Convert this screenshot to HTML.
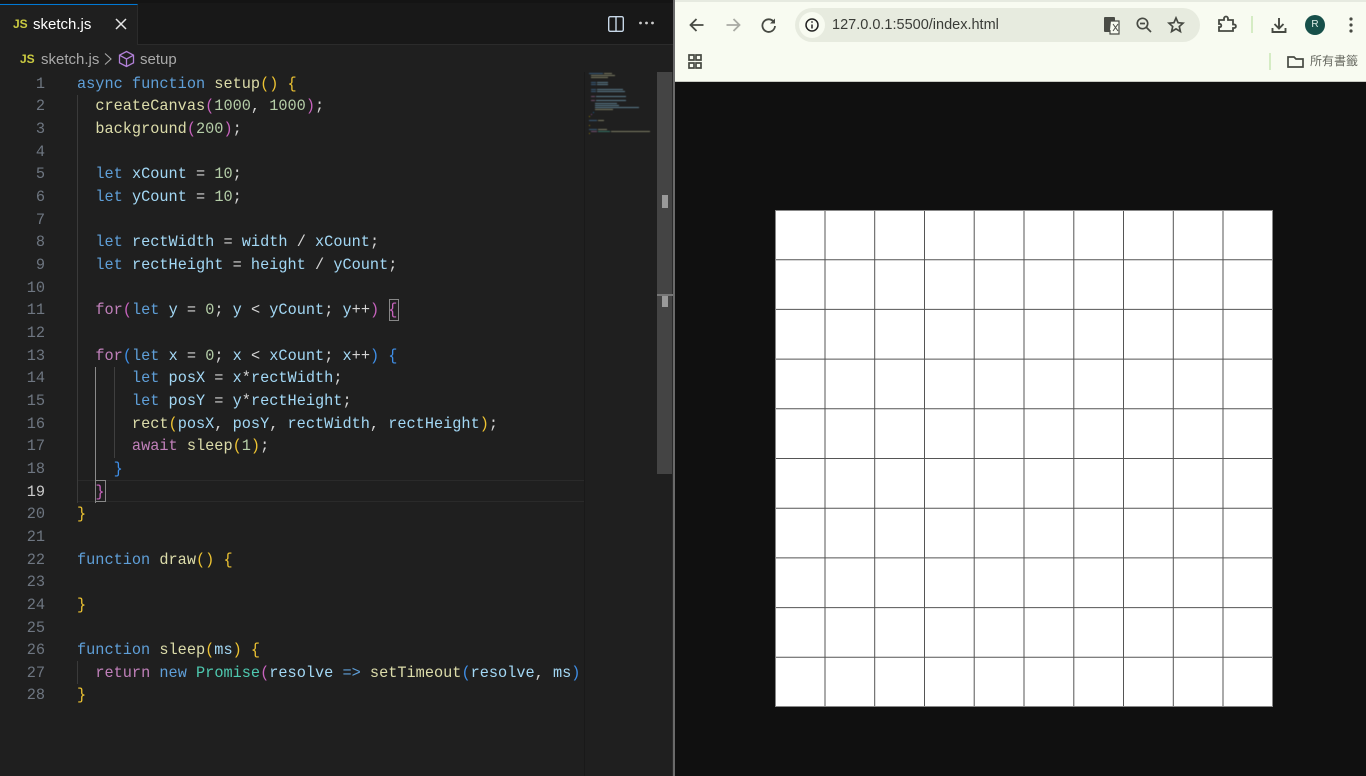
<!DOCTYPE html>
<html><head><meta charset="utf-8">
<style>
html,body{margin:0;padding:0;width:1366px;height:776px;overflow:hidden;background:#101010}
*{box-sizing:border-box}
.a{position:absolute}
#ed{left:0;top:0;width:673px;height:776px;background:#1f1f1f;overflow:hidden}
.l{position:absolute;left:77px;margin-top:1px;height:23px;font:15.25px/23px "Liberation Mono",monospace;color:#d4d4d4;white-space:pre;filter:blur(.25px)}
.n{position:absolute;left:0;margin-top:1px;width:45px;text-align:right;font:15.25px/23px "Liberation Mono",monospace;color:#6e7681;filter:blur(.25px)}
.k{color:#5f9fd8}.c{color:#c080ba}.f{color:#dcdcaa}.v{color:#a3d8f5}.d{color:#b5cea8}.t{color:#4ec9b0}
.g{color:#edc332}.o{color:#c763bd}.b{color:#3f8fe8}
.ui{font-family:"Liberation Sans",sans-serif}
</style></head><body>
<div id="ed" class="a">
<div class="a" style="left:0;top:0;width:673px;height:44px;background:#181818"></div>
<div class="a" style="left:0;top:0;width:673px;height:3px;background:#141414"></div>
<div class="a" style="left:0;top:4px;width:138px;height:41px;background:#1f1f1f;border-top:1px solid #0078d4;border-right:1px solid #2b2b2b"></div>
<div class="a" style="left:138px;top:44px;width:535px;height:1px;background:#2b2b2b"></div>
<div class="a ui" style="left:13px;top:17px;font-size:12px;font-weight:bold;color:#cbcb41;line-height:14px">JS</div>
<div class="a ui" style="left:33px;top:16px;font-size:15px;line-height:18px;color:#fff">sketch.js</div>
<svg class="a" style="left:114px;top:17px" width="14" height="14" viewBox="0 0 14 14"><path d="M2 2L12 12M12 2L2 12" stroke="#e6e6e6" stroke-width="1.5" fill="none"/></svg>
<svg class="a" style="left:607px;top:15px" width="18" height="18" viewBox="0 0 18 18"><rect x="1.7" y="1.7" width="14.6" height="14.6" rx="1.5" fill="none" stroke="#c8d8e8" stroke-width="1.4"/><path d="M9 2V16" stroke="#c8d8e8" stroke-width="1.4"/></svg>
<svg class="a" style="left:638px;top:19px" width="18" height="8" viewBox="0 0 18 8"><circle cx="2.5" cy="4" r="1.4" fill="#ccc"/><circle cx="8.5" cy="4" r="1.4" fill="#ccc"/><circle cx="14.5" cy="4" r="1.4" fill="#ccc"/></svg>

<div class="a ui" style="left:20px;top:52px;font-size:12px;font-weight:bold;color:#cbcb41;line-height:14px">JS</div>
<div class="a ui" style="left:41px;top:51px;font-size:15px;line-height:18px;color:#a9a9a9">sketch.js</div>
<svg class="a" style="left:103px;top:52px" width="10" height="14" viewBox="0 0 10 14"><path d="M2 1.500L8 7L2 12.500" stroke="#a9a9a9" stroke-width="1.1" fill="none"/></svg>
<svg class="a" style="left:118px;top:50px" width="17" height="18" viewBox="0 0 17 18"><path d="M8.500 1.500L15.500 5.200V12.800L8.500 16.500L1.500 12.800V5.200ZM1.500 5.200L8.500 9L15.500 5.200M8.500 9V16.500" fill="none" stroke="#b180d7" stroke-width="1.3"/></svg>
<div class="a ui" style="left:140px;top:51px;font-size:15px;line-height:18px;color:#a9a9a9">setup</div>

<!-- current line -->
<div class="a" style="left:77px;top:480px;width:507px;height:22px;border-top:1px solid #2a2a2a;border-bottom:1px solid #2a2a2a"></div>
<!-- indent guides -->
<div class="a" style="left:77px;top:95px;width:1px;height:408px;background:#3a3a3a"></div>
<div class="a" style="left:95px;top:367px;width:1px;height:136px;background:#8a8a8a"></div>
<div class="a" style="left:114px;top:367px;width:1px;height:91px;background:#3f3f3f"></div>
<div class="a" style="left:77px;top:661px;width:1px;height:23px;background:#3a3a3a"></div>
<!-- bracket match -->
<div class="a" style="left:389px;top:299px;width:10px;height:22px;border:1px solid #888"></div>
<div class="a" style="left:95px;top:480px;width:11px;height:22px;border:1px solid #888"></div>

<div class="n" style="top:71.5px">1</div><div class="l" style="top:71.5px"><span class="k">async</span> <span class="k">function</span> <span class="f">setup</span><span class="g">()</span> <span class="g">{</span></div>
<div class="n" style="top:94.2px">2</div><div class="l" style="top:94.2px">  <span class="f">createCanvas</span><span class="o">(</span><span class="d">1000</span>, <span class="d">1000</span><span class="o">)</span>;</div>
<div class="n" style="top:116.9px">3</div><div class="l" style="top:116.9px">  <span class="f">background</span><span class="o">(</span><span class="d">200</span><span class="o">)</span>;</div>
<div class="n" style="top:139.5px">4</div>
<div class="n" style="top:162.2px">5</div><div class="l" style="top:162.2px">  <span class="k">let</span> <span class="v">xCount</span> = <span class="d">10</span>;</div>
<div class="n" style="top:184.9px">6</div><div class="l" style="top:184.9px">  <span class="k">let</span> <span class="v">yCount</span> = <span class="d">10</span>;</div>
<div class="n" style="top:207.5px">7</div>
<div class="n" style="top:230.2px">8</div><div class="l" style="top:230.2px">  <span class="k">let</span> <span class="v">rectWidth</span> = <span class="v">width</span> / <span class="v">xCount</span>;</div>
<div class="n" style="top:252.8px">9</div><div class="l" style="top:252.8px">  <span class="k">let</span> <span class="v">rectHeight</span> = <span class="v">height</span> / <span class="v">yCount</span>;</div>
<div class="n" style="top:275.5px">10</div>
<div class="n" style="top:298.2px">11</div><div class="l" style="top:298.2px">  <span class="c">for</span><span class="o">(</span><span class="k">let</span> <span class="v">y</span> = <span class="d">0</span>; <span class="v">y</span> &lt; <span class="v">yCount</span>; <span class="v">y</span>++<span class="o">)</span> <span class="o">{</span></div>
<div class="n" style="top:320.8px">12</div>
<div class="n" style="top:343.5px">13</div><div class="l" style="top:343.5px">  <span class="c">for</span><span class="b">(</span><span class="k">let</span> <span class="v">x</span> = <span class="d">0</span>; <span class="v">x</span> &lt; <span class="v">xCount</span>; <span class="v">x</span>++<span class="b">)</span> <span class="b">{</span></div>
<div class="n" style="top:366.2px">14</div><div class="l" style="top:366.2px">      <span class="k">let</span> <span class="v">posX</span> = <span class="v">x</span>*<span class="v">rectWidth</span>;</div>
<div class="n" style="top:388.8px">15</div><div class="l" style="top:388.8px">      <span class="k">let</span> <span class="v">posY</span> = <span class="v">y</span>*<span class="v">rectHeight</span>;</div>
<div class="n" style="top:411.5px">16</div><div class="l" style="top:411.5px">      <span class="f">rect</span><span class="g">(</span><span class="v">posX</span>, <span class="v">posY</span>, <span class="v">rectWidth</span>, <span class="v">rectHeight</span><span class="g">)</span>;</div>
<div class="n" style="top:434.1px">17</div><div class="l" style="top:434.1px">      <span class="c">await</span> <span class="f">sleep</span><span class="g">(</span><span class="d">1</span><span class="g">)</span>;</div>
<div class="n" style="top:456.8px">18</div><div class="l" style="top:456.8px">    <span class="b">}</span></div>
<div class="n" style="top:479.5px;color:#ccc">19</div><div class="l" style="top:479.5px">  <span class="o">}</span></div>
<div class="n" style="top:502.1px">20</div><div class="l" style="top:502.1px"><span class="g">}</span></div>
<div class="n" style="top:524.8px">21</div>
<div class="n" style="top:547.5px">22</div><div class="l" style="top:547.5px"><span class="k">function</span> <span class="f">draw</span><span class="g">()</span> <span class="g">{</span></div>
<div class="n" style="top:570.1px">23</div>
<div class="n" style="top:592.8px">24</div><div class="l" style="top:592.8px"><span class="g">}</span></div>
<div class="n" style="top:615.5px">25</div>
<div class="n" style="top:638.1px">26</div><div class="l" style="top:638.1px"><span class="k">function</span> <span class="f">sleep</span><span class="g">(</span><span class="v">ms</span><span class="g">)</span> <span class="g">{</span></div>
<div class="n" style="top:660.8px">27</div><div class="l" style="top:660.8px;width:505px;overflow:hidden">  <span class="c">return</span> <span class="k">new</span> <span class="t">Promise</span><span class="o">(</span><span class="v">resolve</span> <span class="k">=&gt;</span> <span class="f">setTimeout</span><span class="b">(</span><span class="v">resolve</span>, <span class="v">ms</span><span class="b">)</span></div>
<div class="n" style="top:683.4px">28</div><div class="l" style="top:683.4px"><span class="g">}</span></div>

<!-- minimap -->
<div class="a" style="left:584px;top:72px;width:73px;height:704px;background:#1f1f1f;border-left:1px solid #191919"></div>
<svg class="a" style="left:584px;top:72px;filter:blur(.4px)" width="73" height="64" viewBox="0 0 73 64" shape-rendering="crispEdges">
<g opacity=".5">
<rect x="5" y="1" width="14" height="1" fill="#569cd6"/><rect x="20" y="1" width="8" height="1" fill="#dcdcaa"/>
<rect x="7" y="3" width="24" height="1" fill="#dcdcaa"/><rect x="7" y="5" width="17" height="1" fill="#dcdcaa"/>
<rect x="7" y="10" width="5" height="1" fill="#569cd6"/><rect x="13" y="10" width="11" height="1" fill="#9cdcfe"/>
<rect x="7" y="12" width="5" height="1" fill="#569cd6"/><rect x="13" y="12" width="11" height="1" fill="#9cdcfe"/>
<rect x="7" y="17" width="5" height="1" fill="#569cd6"/><rect x="13" y="17" width="26" height="1" fill="#9cdcfe"/>
<rect x="7" y="19" width="5" height="1" fill="#569cd6"/><rect x="13" y="19" width="28" height="1" fill="#9cdcfe"/>
<rect x="7" y="24" width="4" height="1" fill="#c586c0"/><rect x="12" y="24" width="30" height="1" fill="#9cdcfe"/>
<rect x="7" y="28" width="4" height="1" fill="#c586c0"/><rect x="12" y="28" width="30" height="1" fill="#9cdcfe"/>
<rect x="11" y="31" width="22" height="1" fill="#9cdcfe"/><rect x="11" y="33" width="24" height="1" fill="#9cdcfe"/>
<rect x="11" y="35" width="44" height="1" fill="#9cdcfe"/><rect x="11" y="37" width="18" height="1" fill="#dcdcaa"/>
<rect x="9" y="40" width="1" height="1" fill="#179fff"/><rect x="7" y="42" width="1" height="1" fill="#da70d6"/><rect x="5" y="44" width="1" height="1" fill="#ffd700"/>
<rect x="5" y="48" width="8" height="1" fill="#569cd6"/><rect x="14" y="48" width="6" height="1" fill="#dcdcaa"/>
<rect x="5" y="53" width="1" height="1" fill="#ffd700"/>
<rect x="5" y="57" width="8" height="1" fill="#569cd6"/><rect x="14" y="57" width="9" height="1" fill="#dcdcaa"/>
<rect x="7" y="59" width="6" height="1" fill="#c586c0"/><rect x="14" y="59" width="12" height="1" fill="#4ec9b0"/><rect x="27" y="59" width="39" height="1" fill="#dcdcaa"/>
<rect x="5" y="61" width="1" height="1" fill="#ffd700"/>
</g></svg>
<!-- scrollbar -->
<div class="a" style="left:657px;top:72px;width:16px;height:402px;background:#444"></div>
<div class="a" style="left:672px;top:72px;width:1px;height:704px;background:#2a2a2a"></div>
<div class="a" style="left:657px;top:294px;width:16px;height:2px;background:#777"></div>
<div class="a" style="left:662px;top:195px;width:6px;height:13px;background:#9a9a9a"></div>
<div class="a" style="left:662px;top:296px;width:6px;height:11px;background:#9a9a9a"></div>
</div>
<div class="a" style="left:673px;top:0;width:2px;height:776px;background:#6a6a6a"></div>

<!-- browser -->
<div class="a" style="left:675px;top:0;width:691px;height:82px;background:#f8fbf1;border-bottom:1px solid #c9cbc3"></div>
<div class="a" style="left:675px;top:0;width:691px;height:2px;background:#e6eae0"></div>
<svg class="a" style="left:675px;top:0" width="691" height="82" viewBox="675 0 691 82" fill="none">
<path d="M703.500 25H691M696.500 19L690.500 25L696.500 31" stroke="#474a43" stroke-width="1.8"/>
<path d="M726.500 25H739M733.500 19L739.500 25L733.500 31" stroke="#a9aba4" stroke-width="1.8"/>
<path d="M773.500 21.500A6.300 6.300 0 1 0 775 26" stroke="#474a43" stroke-width="1.8"/><path d="M775 18.500V23.500H770Z" fill="#474a43"/>
<path d="M689 55h5v5h-5zM696 55h5v5h-5zM689 63h5v5h-5zM696 63h5v5h-5z" stroke="#474a43" stroke-width="1.7"/>
<rect x="795" y="8" width="405" height="34" rx="17" fill="#e7ebdf"/>
<circle cx="812" cy="25" r="13" fill="#f8fbf1"/>
<circle cx="812" cy="25" r="6" stroke="#222" stroke-width="1.5"/><path d="M812 24.500V28.500M812 21.300V22.800" stroke="#222" stroke-width="1.5"/>
<rect x="1104" y="17" width="11" height="15" rx="1" fill="#4a4c46"/><path d="M1111 21H1119V34H1110L1110 30" fill="#f8fbf1" stroke="#4a4c46" stroke-width="1.2"/><path d="M1113 24L1118 31M1118 24L1113 31" stroke="#4a4c46"/>
<circle cx="1142.500" cy="23.500" r="5.200" stroke="#474a43" stroke-width="1.7"/><path d="M1146.500 27.500L1151 32M1140 23.500H1145" stroke="#474a43" stroke-width="1.7"/>
<path d="M1176 18L1178.100 22.700L1183 23.200L1179.300 26.500L1180.400 31.500L1176 28.900L1171.600 31.500L1172.700 26.500L1169 23.200L1173.900 22.700Z" stroke="#474a43" stroke-width="1.7"/>
<path d="M1219 20H1224V18.500A2 2 0 0 1 1228 18.500V20H1233V24.500H1234.500A1.800 1.800 0 0 1 1234.500 28H1233V31H1219V27H1220.500A1.800 1.800 0 0 0 1220.500 24H1219Z" stroke="#474a43" stroke-width="1.8"/>
<rect x="1251" y="16" width="2" height="17" fill="#d5ecc4"/>
<path d="M1279 18V28M1274.500 24L1279 28.500L1283.500 24M1272.500 28V32H1285.500V28" stroke="#474a43" stroke-width="1.9"/>
<circle cx="1315" cy="25" r="10" fill="#17504a"/>
<circle cx="1351" cy="19" r="1.600" fill="#474a43"/><circle cx="1351" cy="25" r="1.600" fill="#474a43"/><circle cx="1351" cy="31" r="1.600" fill="#474a43"/>
<rect x="1269" y="53" width="2" height="17" fill="#d5ecc4"/>
<path d="M1288 67V57H1294L1296 59H1303V67Z" stroke="#474a43" stroke-width="1.7"/>
</svg>
<div class="a ui" style="left:832px;top:16px;font-size:14.5px;line-height:18px;color:#3a3c37;white-space:nowrap">127.0.0.1:5500/index.html</div>
<div class="a ui" style="left:1310px;top:19px;width:10px;text-align:center;font-size:10px;line-height:12px;color:#dfeee8">R</div>
<div class="a" style="left:1310px;top:54px;font:12px/15px 'Liberation Sans','Noto Sans CJK TC',sans-serif;color:#666860;white-space:nowrap">所有書籤</div>

<!-- canvas -->
<svg class="a" style="left:775px;top:210px;filter:blur(.25px)" width="498" height="497" viewBox="0 0 498 497">
<rect width="498" height="497" fill="#fff"/>
<path d="M50 0V497M99.700 0V497M149.500 0V497M199.200 0V497M249 0V497M298.800 0V497M348.500 0V497M398.300 0V497M448 0V497M0 49.700H498M0 99.400H498M0 149.100H498M0 198.800H498M0 248.500H498M0 298.200H498M0 347.900H498M0 397.600H498M0 447.300H498" stroke="#555" stroke-width="1" fill="none"/>
<rect x=".5" y=".5" width="497" height="496" fill="none" stroke="#888"/>
</svg>
</body></html>
